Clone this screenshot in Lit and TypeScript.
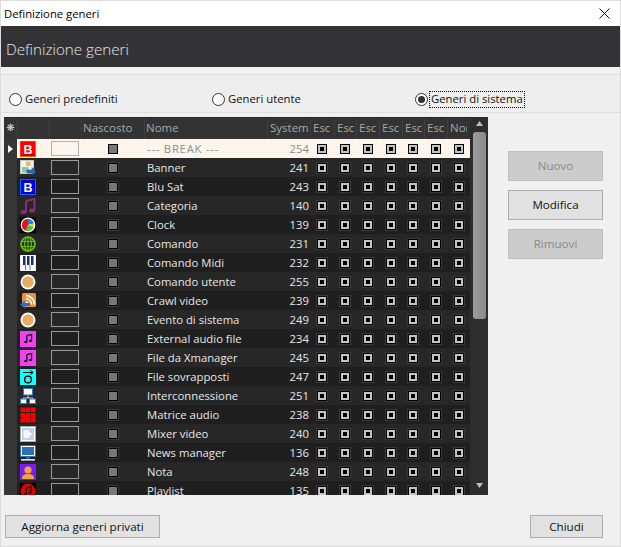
import { LitElement, html, css, svg } from "lit";
import { customElement } from "lit/decorators.js";

const note = (fill: string) => svg`<path d="M6 4.5 L12 3 V11 M6 4.5 V12.5" fill="none" stroke="${fill}" stroke-width="1.5"/><ellipse cx="4.6" cy="12.6" rx="2" ry="1.4" fill="${fill}"/><ellipse cx="10.6" cy="11.2" rx="2" ry="1.4" fill="${fill}"/>`;

const letterB = svg`<text x="8" y="12.6" text-anchor="middle" font-family="Liberation Sans" font-weight="700" font-size="12.5" fill="#fff">B</text>`;

const icons: Record<string, unknown> = {
  break: svg`<rect width="16" height="16" fill="#000"/><rect x="0" y="0" width="15.5" height="15.5" fill="#f00" stroke="#ff6a00"/><rect x="1" y="1" width="14" height="14" fill="#f00"/><rect x="1" y="13.5" width="14" height="1.5" fill="#b00000"/>${letterB}`,
  banner: svg`<rect x="0.5" y="0.5" width="13" height="13" fill="#f2f4ee" stroke="#c8c8c8"/><rect x="6" y="1.5" width="4.5" height="4.5" fill="#eeb36a"/><rect x="2" y="7" width="6.5" height="5.5" fill="#86c9a0"/><path d="M7 10 H12 V7.5 L16 11.5 L12 15.5 V13 H7 Z" fill="#2d6cb0" stroke="#1d4a80" stroke-width=".5"/>`,
  blu: svg`<rect width="16" height="16" fill="#000"/><rect x=".5" y=".5" width="15" height="15" fill="#0000e6" stroke="#0a6cff"/><rect x="1" y="13.5" width="14" height="1.5" fill="#00009a"/>${letterB}`,
  cat: svg`<path d="M6 3 L14.5 1 V12 M6 3 V14" fill="none" stroke="#8c2d7a" stroke-width="2"/><ellipse cx="3.6" cy="14" rx="3" ry="2" fill="#8c2d7a"/><ellipse cx="12" cy="12.4" rx="3" ry="2" fill="#8c2d7a"/>`,
  clock: svg`<rect width="16" height="16" fill="#000"/><circle cx="8" cy="8" r="7.4" fill="#fff"/><path d="M8 8 L8 2 A6 6 0 0 1 13.8 6.6 Z" fill="#2c7fd8"/><path d="M8 8 L13.8 6.6 A6 6 0 0 1 13.6 10 Z" fill="#f2d020"/><path d="M8 8 L13.6 10 A6 6 0 0 1 6 13.7 Z" fill="#4cc24c"/><path d="M8 8 L6 13.7 A6 6 0 0 1 8 2 Z" fill="#e01818"/>`,
  globe: svg`<circle cx="8" cy="8" r="7" fill="none" stroke="#62c000" stroke-width="1.7"/><ellipse cx="8" cy="8" rx="3.4" ry="7" fill="none" stroke="#62c000" stroke-width="1.2"/><path d="M1 5.5 H15 M1 10.5 H15 M8 1 V15" stroke="#62c000" stroke-width="1.2"/>`,
  piano: svg`<rect width="16" height="16" fill="#fff" stroke="#ccc" stroke-width=".5"/><path d="M1 1 H15 V15 H1 Z" fill="#fff"/><rect x="3" y="1" width="2.5" height="9" fill="#16306b"/><rect x="7" y="1" width="2.5" height="9" fill="#16306b"/><rect x="11" y="1" width="2.5" height="9" fill="#16306b"/><path d="M5.5 10 V15 M10 10 V15" stroke="#777"/>`,
  dot: svg`<circle cx="8" cy="8" r="7.5" fill="#fff"/><circle cx="8" cy="8" r="5.7" fill="#e8ad5e"/>`,
  rss: svg`<rect x="2" y="0" width="14" height="14" rx="1.5" fill="#e8923a"/><circle cx="7" cy="10" r="1.5" fill="#fff"/><path d="M6 5.5 A6 6 0 0 1 11.5 11.5 M6 2.5 A9 9 0 0 1 14.5 11.5" fill="none" stroke="#fff" stroke-width="1.6"/><path d="M0 11.5 L5 7.5 V10 H10 V13 H5 V15.5 Z" fill="#2a6fc0"/>`,
  music: svg`<rect width="16" height="16" fill="#f040f0"/><g transform="translate(2 1) scale(.8)">${note("#000")}</g>`,
  ovl: svg`<rect width="16" height="16" fill="#1ff"/><path d="M3 3.5 H13 M10.5 1.5 L13 3.5 L10.5 5.5" fill="none" stroke="#000"/><circle cx="8" cy="10.5" r="3.4" fill="none" stroke="#000" stroke-width="1.4"/>`,
  net: svg`<path d="M8 7 V10 M3 12 V10 H13 V12" fill="none" stroke="#ddd"/><rect x="3.5" y=".5" width="9" height="6.5" fill="#fff" stroke="#2f7ac8"/><rect x=".5" y="11" width="6" height="4.5" fill="#fff" stroke="#2f7ac8"/><rect x="9.5" y="11" width="6" height="4.5" fill="#fff" stroke="#2f7ac8"/>`,
  matrix: svg`<g fill="#f00"><rect x="0.5" y="0.5" width="4.5" height="4.5"/><rect x="6" y="0.5" width="4.5" height="4.5"/><rect x="11" y="0.5" width="4.5" height="4.5"/><rect x="0.5" y="6" width="4.5" height="4.5"/><rect x="6" y="6" width="4.5" height="4.5"/><rect x="11" y="6" width="4.5" height="4.5"/><rect x="0.5" y="11" width="4.5" height="4.5"/><rect x="6" y="11" width="4.5" height="4.5"/><rect x="11" y="11" width="4.5" height="4.5"/></g>`,
  mixer: svg`<rect x=".5" y=".5" width="15" height="15" fill="#fff" stroke="#a8a8a8"/><rect x="2" y="2" width="12" height="12" fill="#b9d2ee"/><path d="M3.5 4 H9 V5.5 L12.5 8 L9 10.5 V12 H3.5 Z" fill="#f4f8fc"/>`,
  news: svg`<rect x=".5" y=".5" width="15" height="11" fill="#fff" stroke="#2f6fb5"/><rect x="2" y="2" width="12" height="8" fill="#2f6fb5"/><rect x="6" y="12" width="4" height="1.5" fill="#2f6fb5"/><rect x="1" y="14" width="14" height="1.6" fill="#dce8f5"/>`,
  nota: svg`<rect width="16" height="16" fill="#7a1cf2"/><circle cx="8" cy="6" r="3.6" fill="#f0a23c"/><path d="M2 15 C2 10.5 5 10 8 10 C11 10 14 10.5 14 15 Z" fill="#f0a23c"/>`,
  play: svg`<rect width="16" height="16" fill="#000"/><circle cx="8" cy="8" r="7.5" fill="#e00000"/><g transform="translate(2 1.5) scale(.75)">${note("#000")}</g>`,
};

const rows: [string, string, number][] = [
  ["break", "--- BREAK ---", 254],
  ["banner", "Banner", 241],
  ["blu", "Blu Sat", 243],
  ["cat", "Categoria", 140],
  ["clock", "Clock", 139],
  ["globe", "Comando", 231],
  ["piano", "Comando Midi", 232],
  ["dot", "Comando utente", 255],
  ["rss", "Crawl video", 239],
  ["dot", "Evento di sistema", 249],
  ["music", "External audio file", 234],
  ["music", "File da Xmanager", 245],
  ["ovl", "File sovrapposti", 247],
  ["net", "Interconnessione", 251],
  ["matrix", "Matrice audio", 238],
  ["mixer", "Mixer video", 240],
  ["news", "News manager", 136],
  ["nota", "Nota", 248],
  ["play", "Playlist", 135],
];

const flags = [0, 1, 2, 3, 4, 5, 6];

@customElement("app-root")
export class AppRoot extends LitElement {
  static styles = css`
    :host {
      display: block;
      width: 621px;
      height: 547px;
      overflow: hidden;
      font-family: "Open Sans", "Noto Sans", sans-serif;
      font-size: 11.3px;
      color: #111;
    }
    * { box-sizing: border-box; }
    .win {
      width: 621px;
      height: 547px;
      border: 1px solid #dcdcdc;
      background: #f0f0f0;
      display: flex;
      flex-direction: column;
    }
    .title {
      height: 25px;
      flex: none;
      background: #fff;
      display: flex;
      align-items: center;
      justify-content: space-between;
      padding: 0 10px 0 3px;
      color: #000;
    }
    .title svg { display: block; }
    .head {
      height: 41px;
      flex: none;
      background: #333335;
      color: #e4e4e4;
      display: flex;
      align-items: center;
      padding: 4px 5px 0;
      font-size: 15.2px;
      font-weight: 300;
    }
    .radios {
      margin-top: 7px;
      height: 39px;
      flex: none;
      background: #eeeeee;
      border-top: 1px solid #dfdfdf;
      border-bottom: 1px solid #dfdfdf;
      display: grid;
      grid-template-columns: repeat(3, 203px);
      align-items: end;
      padding: 0 0 4px 8px;
    }
    .radio { display: flex; align-items: center; gap: 2px; height: 18px; }
    .circle {
      width: 13px;
      height: 13px;
      border-radius: 50%;
      border: 1px solid #333;
      background: #fff;
      display: flex;
      align-items: center;
      justify-content: center;
      flex: none;
    }
    .radio.on .circle::after {
      content: "";
      width: 7px;
      height: 7px;
      border-radius: 50%;
      background: #333;
    }
    .radio span { padding: 0 1px; height: 17px; line-height: 14px; border: 1px dotted transparent; margin-left: -1px; }
    .radio.on span { border-color: #000; }
    .main { margin-top: 4px; display: flex; padding-left: 3px; gap: 20px; flex: none; }
    .grid { width: 484px; height: 378px; display: flex; background: #2d2d2d; overflow: hidden; flex: none; }
    .table { width: 466px; flex: none; }
    .cols {
      display: grid;
      grid-template-columns: 13px 32px 32px 63px 123px 43px 24px 22px 23px 23px 22px 23px 23px;
    }
    .hdr { height: 22px; background: #333333; border-top: 1px solid #262626; color: #a4a8ac; font-size: 11.5px; }
    .hdr > div {
      border-left: 1px solid #404040;
      padding: 0 0 0 2px;
      line-height: 20px;
      white-space: nowrap;
      overflow: hidden;
    }
    .hdr > div.txt { padding-left: 1px; }
    .hdr > div:first-child { border-left: 0; padding: 0; display: flex; justify-content: center; color: #ddd; font-size: 10px; font-family: "DejaVu Sans", sans-serif; }
    .hdr .clip { display: block; width: 17px; overflow: hidden; }
    .row { height: 19px; align-items: center; background: #1f1f1f; color: #e6e6e6; }
    .row:nth-child(odd) { background: #272727; }
    .row.sel { background: #fdf5ec; color: #8c8c8c; }
    .row > div { height: 19px; display: flex; align-items: center; }
    .ind { background: #363636; justify-content: center; }
    .ico { padding-left: 3px; }
    .ico svg { display: block; }
    .col { justify-content: center; }
    .swatch { width: 28px; height: 15px; border: 1px solid #9a9a9a; }
    .row.sel .swatch { border-color: #b0b0b0; }
    .hid { justify-content: center; }
    .hbox { width: 10px; height: 10px; border: 1px solid #000; background: #777; outline: 1px solid #383838; }
    .row.sel .hbox { outline: none; }
    .name { padding-left: 3px; white-space: nowrap; }
    .row.sel .name { letter-spacing: 0.75px; }
    .num { justify-content: flex-end; padding-right: 1px; }
    .flag { justify-content: center; }
    .fbox {
      width: 10px;
      height: 10px;
      border: 1px solid #000;
      background: #c4c4c4;
      outline: 1px solid #383838;
      display: flex;
      align-items: center;
      justify-content: center;
    }
    .fbox::after { content: ""; width: 4px; height: 4px; background: #000; }
    .row.sel .fbox { outline: none; }
    .bar {
      flex: 1;
      display: flex;
      flex-direction: column;
      align-items: center;
      background: #2d2d2d;
      padding: 3px 0 6px;
    }
    .bar svg { display: block; flex: none; }
    .thumb {
      width: 13px;
      height: 187px;
      margin-top: 5px;
      border-radius: 3px;
      background: linear-gradient(90deg, #9c9c9c, #8a8a8a);
    }
    .spacer { flex: 1; }
    .actions { display: flex; flex-direction: column; gap: 9px; margin-top: 34px; width: 95px; flex: none; }
    .btn {
      border: 1px solid #adadad;
      background: #e1e1e1;
      color: #111;
      display: flex;
      align-items: center;
      justify-content: center;
      height: 30px;
      padding-bottom: 1px;
      font-size: 11.6px;
    }
    .btn.off { background: #cccccc; border-color: #bfbfbf; color: #8a8a8a; }
    .foot { margin-top: 20px; display: flex; justify-content: space-between; padding: 0 17px 0 4px; flex: none; }
    .foot .btn { height: 23px; }
    .b1 { width: 155px; }
    .b2 { width: 73px; }
  `;

  render() {
    return html`
      <div class="win">
        <div class="title">
          <span>Definizione generi</span>
          <svg width="11" height="11" viewBox="0 0 11 11"><path d="M.5 .5 L10.5 10.5 M10.5 .5 L.5 10.5" stroke="#111" fill="none"/></svg>
        </div>
        <div class="head">Definizione generi</div>
        <div class="radios">
          <div class="radio"><div class="circle"></div><span>Generi predefiniti</span></div>
          <div class="radio"><div class="circle"></div><span>Generi utente</span></div>
          <div class="radio on"><div class="circle"></div><span>Generi di sistema</span></div>
        </div>
        <div class="main">
          <div class="grid">
            <div class="table">
              <div class="cols hdr">
                <div>❋</div><div></div><div></div><div class="txt">Nascosto</div><div class="txt">Nome</div><div>System</div>
                ${flags.map((i) => html`<div><span class="clip">${i === 6 ? "Nor" : "Esc"}</span></div>`)}
              </div>
              ${rows.map(
                ([ic, name, num], i) => html`
                  <div class="cols row ${i === 0 ? "sel" : ""}">
                    <div class="ind">
                      ${i === 0
                        ? html`<svg width="5" height="8" viewBox="0 0 5 8"><path d="M0 0 L5 4 L0 8 Z" fill="#fff"/></svg>`
                        : ""}
                    </div>
                    <div class="ico"><svg width="16" height="16" viewBox="0 0 16 16">${icons[ic]}</svg></div>
                    <div class="col"><div class="swatch"></div></div>
                    <div class="hid"><div class="hbox"></div></div>
                    <div class="name">${name}</div>
                    <div class="num">${num}</div>
                    ${flags.map(() => html`<div class="flag"><div class="fbox"></div></div>`)}
                  </div>
                `
              )}
            </div>
            <div class="bar">
              <svg width="9" height="7" viewBox="0 0 9 7"><path d="M4.5 1 L8 6 H1 Z" fill="#bdbdbd"/></svg>
              <div class="thumb"></div>
              <div class="spacer"></div>
              <svg width="9" height="7" viewBox="0 0 9 7"><path d="M4.5 6 L8 1 H1 Z" fill="#bdbdbd"/></svg>
            </div>
          </div>
          <div class="actions">
            <div class="btn off">Nuovo</div>
            <div class="btn">Modifica</div>
            <div class="btn off">Rimuovi</div>
          </div>
        </div>
        <div class="foot">
          <div class="btn b1">Aggiorna generi privati</div>
          <div class="btn b2">Chiudi</div>
        </div>
      </div>
    `;
  }
}
